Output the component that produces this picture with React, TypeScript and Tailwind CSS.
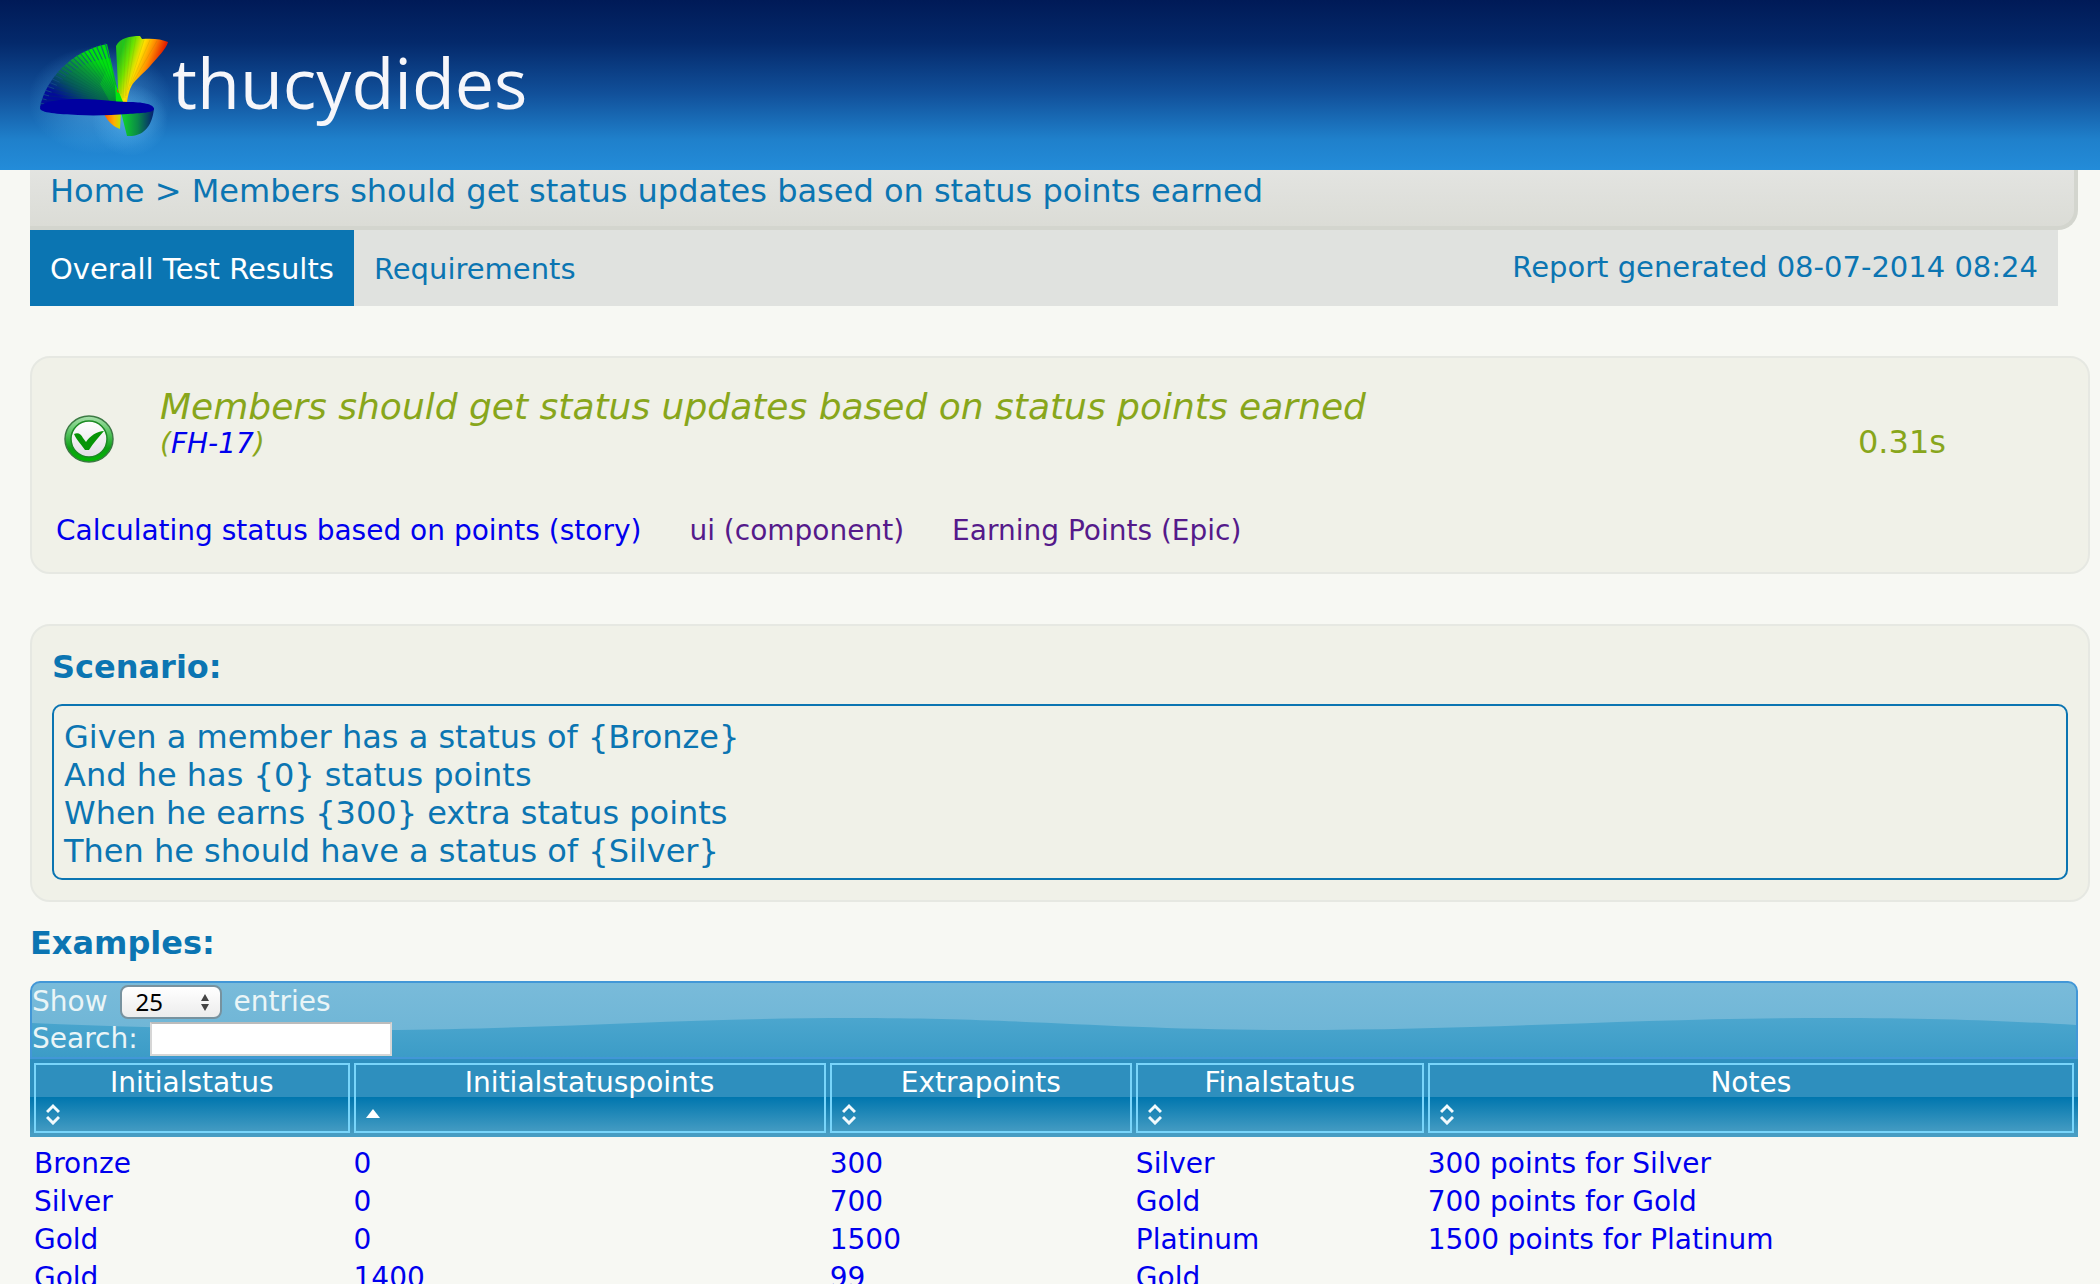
import React from 'react';

interface Example {
  initialStatus: string;
  initialPoints: string;
  extraPoints: string;
  finalStatus: string;
  notes: string;
}

interface Column {
  label: string;
  width: string;
  sorted?: boolean;
}

const columns: Column[] = [
  { label: 'Initialstatus', width: 'w-[15.7%]' },
  { label: 'Initialstatuspoints', width: 'w-[23.25%]', sorted: true },
  { label: 'Extrapoints', width: 'w-[14.95%]' },
  { label: 'Finalstatus', width: 'w-[14.25%]' },
  { label: 'Notes', width: 'w-[31.85%]' },
];

const examples: Example[] = [
  { initialStatus: 'Bronze', initialPoints: '0', extraPoints: '300', finalStatus: 'Silver', notes: '300 points for Silver' },
  { initialStatus: 'Silver', initialPoints: '0', extraPoints: '700', finalStatus: 'Gold', notes: '700 points for Gold' },
  { initialStatus: 'Gold', initialPoints: '0', extraPoints: '1500', finalStatus: 'Platinum', notes: '1500 points for Platinum' },
  { initialStatus: 'Gold', initialPoints: '1400', extraPoints: '99', finalStatus: 'Gold', notes: '' },
];

const scenarioSteps = [
  'Given a member has a status of {Bronze}',
  'And he has {0} status points',
  'When he earns {300} extra status points',
  'Then he should have a status of {Silver}',
];

const title = 'Members should get status updates based on status points earned';

// Ribs of the left fan: the outer tip, and the point where the rib becomes solid
const ribs = Array.from({ length: 22 }, (_, i) => {
  const t = i / 21;
  const x = (1 - t) ** 2 * 11 + 2 * (1 - t) * t * 28 + t ** 2 * 76;
  const y = (1 - t) ** 2 * 80 + 2 * (1 - t) * t * 33 + t ** 2 * 20;
  const gap = 0.04 + t * 0.2;
  return { x, y, innerX: x + (90 - x) * gap, innerY: y + (80 - y) * gap };
});

const FanLogo = () => (
  <svg width="142" height="140" viewBox="0 0 142 140" className="shrink-0" aria-hidden="true">
    <defs>
      <radialGradient id="glow">
        <stop offset="0" stopColor="#7fd0ff" stopOpacity="0.5" />
        <stop offset="0.6" stopColor="#5eb8f0" stopOpacity="0.25" />
        <stop offset="1" stopColor="#5eb8f0" stopOpacity="0" />
      </radialGradient>
      <linearGradient id="leftFan" gradientUnits="userSpaceOnUse" x1="88" y1="50" x2="55" y2="98">
        <stop offset="0" stopColor="#00e010" />
        <stop offset="0.25" stopColor="#0a9a38" />
        <stop offset="0.6" stopColor="#06585c" />
        <stop offset="0.9" stopColor="#020c98" />
      </linearGradient>
      <linearGradient id="rightFan" gradientUnits="userSpaceOnUse" x1="86" y1="42" x2="126" y2="56">
        <stop offset="0" stopColor="#22c41c" />
        <stop offset="0.22" stopColor="#6fe400" />
        <stop offset="0.45" stopColor="#ffe000" />
        <stop offset="0.68" stopColor="#ff8c00" />
        <stop offset="0.95" stopColor="#e01c00" />
      </linearGradient>
      <linearGradient id="lowerFan" x1="0" y1="0" x2="1" y2="0">
        <stop offset="0" stopColor="#10d82a" />
        <stop offset="0.5" stopColor="#0a8a48" />
        <stop offset="1" stopColor="#041c74" />
      </linearGradient>
      <linearGradient id="ember" x1="0" y1="0" x2="1" y2="0">
        <stop offset="0" stopColor="#ff5a00" />
        <stop offset="0.6" stopColor="#ffb000" />
        <stop offset="1" stopColor="#b8e800" />
      </linearGradient>
    </defs>
    <ellipse cx="70" cy="76" rx="72" ry="54" fill="url(#glow)" />
    <ellipse cx="100" cy="96" rx="38" ry="36" fill="url(#glow)" />
    <path d="M10 83C16 54 42 27 77 20L90 76V84H12Z" fill="url(#leftFan)" />
    <path d="M80 40L91 78H80L70 60Z" fill="#00e810" fillOpacity="0.35" />
    {ribs.map((rib, i) => (
      <g key={i}>
        <path d={`M${rib.x} ${rib.y}L90 80`} stroke="#04503c" strokeOpacity="0.2" strokeWidth="1" />
        <path d={`M${rib.x - 1} ${rib.y - 1}L${rib.innerX} ${rib.innerY}`} stroke="#144c8c" strokeOpacity="0.8" strokeWidth="1" />
      </g>
    ))}
    <path d="M86 22C90 14 100 12 110 12L112 15C122 14 132 15 138 18C136 25 128 33 121 41C114 49 106 55 102 61C99 66 98 72 97 78H89L88 62Z" fill="url(#rightFan)" />
    <path d="M85 60L88 66L93 78H86Z" fill="#00e810" />
    <path d="M87 64L89 69L87 68Z" fill="#d06000" />
    <path d="M91 16L91 70M96 14L93 74M101 13L95 74M106 13L96 72M114 16L98 66M120 16L100 62M127 17L102 60" fill="none" stroke="#7a8000" strokeOpacity="0.15" strokeWidth="1" />
    <path d="M74 90C78 98 84 103 90 105L91 88Z" fill="url(#ember)" />
    <path d="M91 88L97 112C110 113 122 106 124 84Z" fill="url(#lowerFan)" />
    <path d="M10 84C12 77 30 75 50 75C72 75 84 78 98 78C112 78 124 80 124 85C124 89 110 89 98 90C82 91 66 92 48 91C28 90 10 89 10 84Z" fill="#0000a0" />
  </svg>
);

const PassedIcon = () => (
  <svg width="50" height="50" viewBox="0 0 50 50" role="img" aria-label="Passed">
    <defs>
      <linearGradient id="ring" x1="0" y1="0" x2="0" y2="1">
        <stop offset="0" stopColor="#a8e0ac" />
        <stop offset="0.35" stopColor="#5cc566" />
        <stop offset="0.7" stopColor="#0ca014" />
        <stop offset="1" stopColor="#00b800" />
      </linearGradient>
      <linearGradient id="face" x1="0" y1="0" x2="0" y2="1">
        <stop offset="0" stopColor="#ffffff" />
        <stop offset="1" stopColor="#e2dfe4" />
      </linearGradient>
    </defs>
    <ellipse cx="25" cy="25" rx="24" ry="23" fill="url(#ring)" stroke="#3c7a44" strokeWidth="1.5" />
    <circle cx="25" cy="25" r="18" fill="url(#face)" stroke="#1c8a24" strokeWidth="1.5" />
    <path d="M10 20C14 18 17 20 19 24L22 28C26 22 33 17 40 17C35 23 29 29 25 36H21C18 31 13 27 10 20Z" fill="#079407" />
  </svg>
);

const SortIcon = ({ sorted }: { sorted?: boolean }) => (
  <svg width="14" height="22" viewBox="0 0 14 22" aria-hidden="true">
    {sorted ? (
      <path d="M0 15L7 6L14 15Z" fill="#fff" />
    ) : (
      <path d="M1 9L7 3L13 9M1 14L7 20L13 14" fill="none" stroke="#f2fafd" strokeWidth="3" />
    )}
  </svg>
);

const Header = () => (
  <header className="flex h-[170px] items-start bg-[linear-gradient(180deg,#001a57_0%,#04296b_25%,#11509a_55%,#1f80cb_82%,#238cd9_100%)] pl-[30px] pt-6">
    <a href="#" className="flex items-start">
      <FanLogo />
      <span className="font-['Open_Sans',sans-serif] text-[70px] leading-[116px] text-[#f6f6fa]">thucydides</span>
    </a>
  </header>
);

const Navigation = () => (
  <div className="pl-[30px]">
    <div className="mr-[22px] h-[60px] rounded-br-[20px] border-b-4 border-r-4 border-[#d3d5ce] bg-linear-to-b from-[#e3e4e1] to-[#dbdcd6] pl-5 pt-[2px] text-[32px] leading-[38px]">
      <a href="#">Home</a> &gt; {title}
    </div>
    <nav className="mr-[42px] flex h-[76px] items-center justify-between bg-[#e0e2df] pr-5 text-[29px]">
      <div className="flex h-full">
        <a href="#" className="flex items-center bg-[#0b75b2] px-5 pt-1 text-white">Overall Test Results</a>
        <a href="#" className="flex items-center px-5 pt-1">Requirements</a>
      </div>
      <span>Report generated 08-07-2014 08:24</span>
    </nav>
  </div>
);

const Summary = () => (
  <section className="ml-[30px] mr-[10px] mt-[50px] rounded-[20px] border-2 border-[#e6e8e2] bg-[#f0f1e8] px-6 pb-6 pt-[26px] text-[28px] leading-[34px]">
    <div className="flex items-center text-[#88a61b]">
      <div className="w-[104px] shrink-0 pl-2 pt-[30px]">
        <PassedIcon />
      </div>
      <div className="flex-1 italic">
        <h2 className="text-[36px] leading-10">{title}</h2>
        <p>
          (<a href="#" className="text-[#0000ee]">FH-17</a>)
        </p>
      </div>
      <span className="w-[206px] pt-9 text-[32px]">0.31s</span>
    </div>
    <div className="mt-[50px] flex gap-12">
      <a href="#" className="text-[#0000ee]">Calculating status based on points (story)</a>
      <a href="#" className="text-[#551a8b]">ui (component)</a>
      <a href="#" className="text-[#551a8b]">Earning Points (Epic)</a>
    </div>
  </section>
);

const Scenario = () => (
  <section className="ml-[30px] mr-[10px] mt-[50px] rounded-[20px] border-2 border-[#e6e8e2] bg-[#f0f1e8] px-5 pb-5 pt-[22px] text-[32px] leading-[38px]">
    <h3 className="font-bold">Scenario:</h3>
    <div className="mt-[18px] rounded-[10px] border-2 border-[#0b75b2] px-[10px] pb-2 pt-3">
      {scenarioSteps.map((step) => (
        <p key={step}>{step}</p>
      ))}
    </div>
  </section>
);

const TableToolbar = () => (
  <div className="relative overflow-hidden rounded-t-[10px] border-2 border-[#4297d7] bg-linear-to-b from-[#79bbda] to-[#6ab3d4] text-[28px] leading-[38px] text-[#eaf5f7]">
    <svg className="absolute inset-0 h-full w-full" viewBox="0 0 2044 74" preserveAspectRatio="none" aria-hidden="true">
      <defs>
        <linearGradient id="wave" x1="0" y1="0" x2="0" y2="1">
          <stop offset="0" stopColor="#4ba6ce" />
          <stop offset="1" stopColor="#3c9cc7" />
        </linearGradient>
      </defs>
      <path d="M0 40C120 45 240 48 350 47C520 46 650 35 820 35C1000 35 1080 47 1260 47C1460 47 1600 35 1800 35C1900 35 1980 38 2044 42V74H0Z" fill="url(#wave)" />
    </svg>
    <div className="relative">
      <div className="flex h-[38px] items-center gap-3">
        <label htmlFor="page-size">Show</label>
        <div className="relative flex">
          <select
            id="page-size"
            defaultValue="25"
            className="h-[34px] w-[102px] appearance-none rounded-[8px] border-2 border-[#77929f] bg-linear-to-b from-white to-[#ececec] pl-[14px] font-['Noto_Sans',sans-serif] text-[24px] leading-[28px] text-black"
          >
            <option>10</option>
            <option>25</option>
            <option>50</option>
            <option>100</option>
          </select>
          <svg className="pointer-events-none absolute right-3 top-[9px]" width="10" height="18" viewBox="0 0 10 18" aria-hidden="true">
            <path d="M5 0L9 7H1ZM5 17L9 10H1Z" fill="#444" />
          </svg>
        </div>
        <span>entries</span>
      </div>
      <div className="flex h-9 items-center gap-3">
        <label htmlFor="search">Search:</label>
        <input
          id="search"
          type="text"
          className="h-[34px] w-[242px] border-2 border-[#d6d6d6] border-t-[#bcbcbc] bg-white px-1 text-[22px] text-black"
        />
      </div>
    </div>
  </div>
);

const Examples = () => (
  <section className="ml-[30px] mr-[22px] mt-[22px]">
    <h3 className="mb-[19px] text-[32px] font-bold leading-[38px]">Examples:</h3>
    <TableToolbar />
    <table className="w-full table-fixed border-collapse text-[28px]">
      <thead>
        <tr>
          {columns.map((column) => (
            <th
              key={column.label}
              className={`${column.width} bg-[linear-gradient(180deg,#2e8fbe_38px,#0076ae_38px,#479dc3_74px)] px-[2px] py-1 font-normal text-white first:pl-1 last:pr-1`}
            >
              <button type="button" className="block h-[70px] w-full border-2 border-[#79d5fa]">
                <span className="block text-center leading-9">{column.label}</span>
                <span className="flex h-[30px] items-center pb-1 pl-[10px]">
                  <SortIcon sorted={column.sorted} />
                </span>
              </button>
            </th>
          ))}
        </tr>
      </thead>
      <tbody className="leading-[38px] text-[#0000ee] [&>tr:first-child>td]:pt-2">
        {examples.map((row, i) => (
          <tr key={i} className="[&>td:first-child]:pl-1 [&>td]:pl-[2px]">
            <td><a href="#">{row.initialStatus}</a></td>
            <td><a href="#">{row.initialPoints}</a></td>
            <td><a href="#">{row.extraPoints}</a></td>
            <td><a href="#">{row.finalStatus}</a></td>
            <td><a href="#">{row.notes}</a></td>
          </tr>
        ))}
      </tbody>
    </table>
  </section>
);

export default function App() {
  return (
    <div className="min-h-screen bg-[#f7f8f3] font-['Verdana','DejaVu_Sans',sans-serif] text-[#0b75b2]">
      <Header />
      <Navigation />
      <main>
        <Summary />
        <Scenario />
        <Examples />
      </main>
    </div>
  );
}
